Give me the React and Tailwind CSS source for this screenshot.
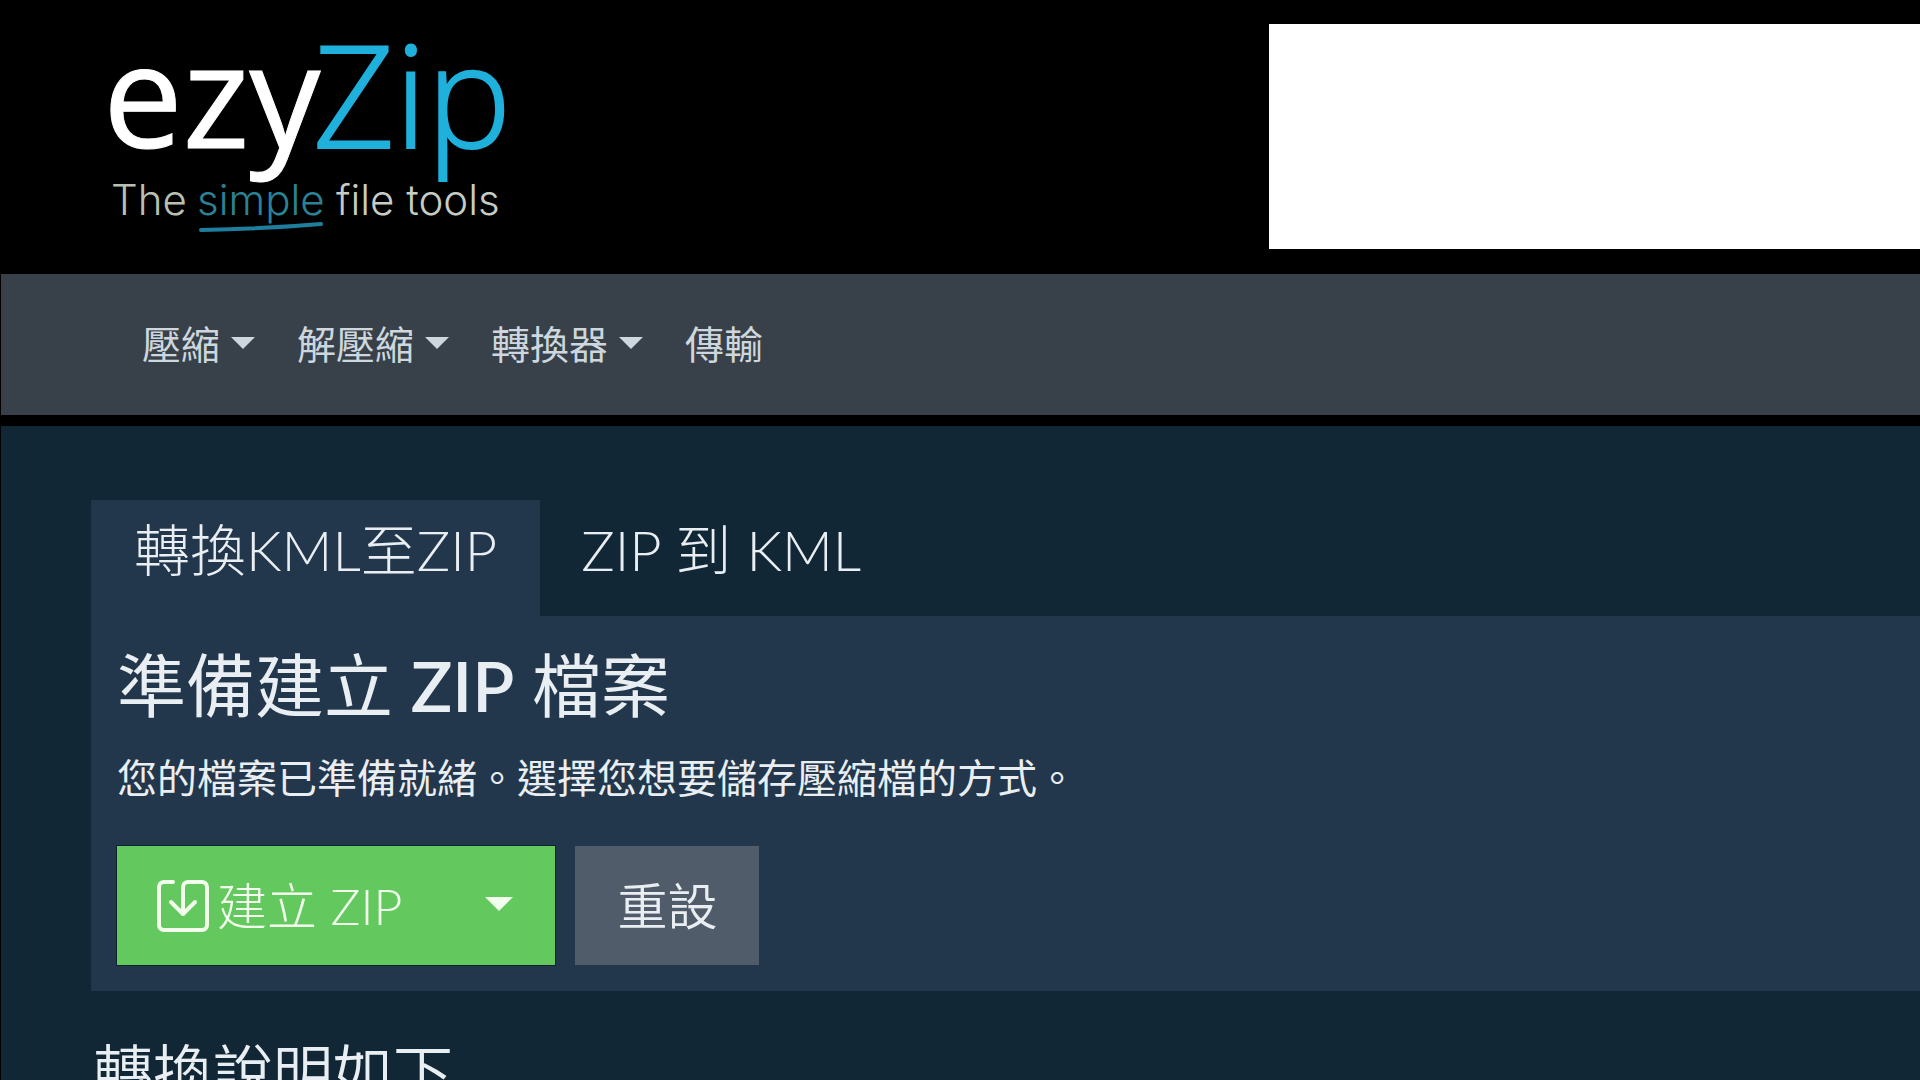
const NAV_ITEMS = [
  { label: '壓縮', menu: true },
  { label: '解壓縮', menu: true },
  { label: '轉換器', menu: true },
  { label: '傳輸', menu: false },
]

function Caret({ className }) {
  return (
    <svg viewBox="0 0 24 12" className={`shrink-0 ${className}`} fill="currentColor" aria-hidden="true">
      <path d="M0 0h24L12 12z" />
    </svg>
  )
}

function Logo() {
  return (
    <a href="#" aria-label="ezyZip" className="block">
      <svg viewBox="0 0 400 210" className="w-[400px] h-[210px] overflow-visible">
        <g fontFamily="'Open Sans', 'Noto Sans', sans-serif" fontSize="142">
          <text x="-9" y="124" fill="#ffffff" stroke="#ffffff">ezy</text>
          <text x="201" y="124" fill="#1fb0dc" stroke="#1fb0dc" strokeWidth="2" fontWeight="300">
            Zip
          </text>
        </g>
        <g fontFamily="Inter, 'Liberation Sans', sans-serif" fontSize="42" fontWeight="300">
          <text x="-1" y="191" fill="#b9c0b0">The</text>
          <text x="85" y="191" fill="#2a8294">simple</text>
          <text x="224" y="191" fill="#c6cdc3">file tools</text>
        </g>
        <path d="M89 206Q150 205 209 200" fill="none" stroke="#1d7f9d" strokeWidth="4" strokeLinecap="round" />
      </svg>
    </a>
  )
}

function DownloadIcon() {
  return (
    <svg
      viewBox="0 0 52 52"
      className="w-[52px] h-[52px] shrink-0"
      fill="none"
      stroke="currentColor"
      strokeWidth="4"
      strokeLinecap="round"
      strokeLinejoin="round"
      aria-hidden="true"
    >
      <path d="M16 2H7a5 5 0 0 0-5 5v38a5 5 0 0 0 5 5h38a5 5 0 0 0 5-5V7a5 5 0 0 0-5-5H31a5 5 0 0 0-5 5v27" />
      <path d="M14 22l12 12 12-12" />
    </svg>
  )
}

export default function App() {
  return (
    <div className="h-screen overflow-hidden bg-black font-['Lato','Noto_Sans_CJK_TC',sans-serif] text-[#e9eef2]">
      <header className="flex items-start justify-between h-[274px] pt-6 pl-[112px]">
        <Logo />
        <div className="w-[651px] h-[225px] bg-white" />
      </header>

      <nav className="flex items-center gap-[42px] h-[141px] ml-px pl-[141px] bg-[#384149] text-[39px] text-[#ced6de]">
        {NAV_ITEMS.map((item) => (
          <a key={item.label} href="#" className="flex items-center gap-[11px]">
            {item.label}
            {item.menu && <Caret className="w-6 h-3 mb-1" />}
          </a>
        ))}
      </nav>

      <main className="min-h-[654px] mt-[11px] ml-px pt-[74px] pl-[90px] bg-[#122735]">
        <div role="tablist" className="flex text-[56px] font-light leading-[60px]">
          <button role="tab" aria-selected="true" className="h-[116px] px-[43px] pb-4 bg-[#22374b] whitespace-nowrap">
            轉換KML至ZIP
          </button>
          <button role="tab" aria-selected="false" className="h-[116px] px-[41px] pb-4 whitespace-nowrap">
            ZIP 到 KML
          </button>
        </div>

        <section className="h-[375px] px-[26px] pt-7 bg-[#22374b]">
          <h1 className="text-[69px] leading-[84px]">
            準備建立 <span className="font-semibold">ZIP</span> 檔案
          </h1>
          <p className="mt-5 text-[40px] leading-[60px]">您的檔案已準備就緒。選擇您想要儲存壓縮檔的方式。</p>

          <div className="flex gap-5 mt-[38px] text-[50px] leading-[60px]">
            <div className="flex h-[119px] bg-[#63c95f] text-[#f1ffec] font-light outline outline-[#0c2233]">
              <button className="flex items-center gap-2 pl-10 pr-10 whitespace-nowrap">
                <DownloadIcon />
                建立 ZIP
              </button>
              <button aria-label="更多選項" className="flex items-center justify-center w-[113px]">
                <Caret className="w-7 h-[14px] mb-1" />
              </button>
            </div>
            <button className="h-[119px] px-[42px] bg-[#505c69] font-[350] whitespace-nowrap">重設</button>
          </div>
        </section>

        <h2 className="pt-[51px] pl-0.5 text-[60px] font-[350] leading-[60px]">轉換說明如下</h2>
      </main>
    </div>
  )
}
